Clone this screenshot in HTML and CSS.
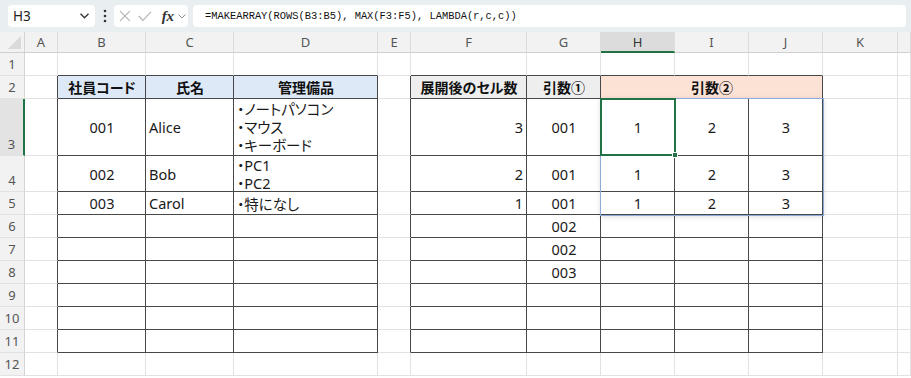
FILE: index.html
```html
<!DOCTYPE html>
<html lang="ja">
<head>
    <meta charset="UTF-8">
    <title>MAKEARRAY</title>
    <link rel="stylesheet" href="styles.css">
</head>
<body>
    <div class="topbar">
        <div class="namebox">
            <span>H3</span>
            <svg width="9" height="6" viewBox="0 0 9 6"><polyline points="0.5,0.8 4.5,4.8 8.5,0.8" fill="none" stroke="#333" stroke-width="1.3"/></svg>
        </div>
        <div class="dots">
            <svg width="4" height="14" viewBox="0 0 4 14"><circle cx="2" cy="2" r="1.3" fill="#333"/><circle cx="2" cy="7" r="1.3" fill="#333"/><circle cx="2" cy="12" r="1.3" fill="#333"/></svg>
        </div>
        <div class="fxbox">
            <svg width="12" height="12" viewBox="0 0 12 12"><path d="M1 1 L11 11 M11 1 L1 11" stroke="#b4b4b4" stroke-width="1.2" fill="none"/></svg>
            <svg width="14" height="11" viewBox="0 0 14 11"><polyline points="0.8,5 5,9.5 13.2,0.8" stroke="#b4b4b4" stroke-width="1.2" fill="none"/></svg>
            <span class="fx">fx</span>
            <svg width="8" height="5" viewBox="0 0 8 5"><polyline points="0.5,0.5 4,4 7.5,0.5" fill="none" stroke="#888" stroke-width="1"/></svg>
        </div>
        <div class="formula">=MAKEARRAY(ROWS(B3:B5), MAX(F3:F5), LAMBDA(r,c,c))</div>
    </div>

    <div class="sheet">
        <div class="cells">
            <!-- column headers -->
            <div class="corner"><span class="tri"></span></div>
            <div class="hd">A</div>
            <div class="hd">B</div>
            <div class="hd">C</div>
            <div class="hd">D</div>
            <div class="hd">E</div>
            <div class="hd">F</div>
            <div class="hd">G</div>
            <div class="hd sel">H</div>
            <div class="hd">I</div>
            <div class="hd">J</div>
            <div class="hd">K</div>
            <div class="hd"></div>

            <!-- row 1 -->
            <div class="rh">1</div>
            <div class="c"></div>
            <div class="c bt"></div><div class="c bt"></div><div class="c bt"></div>
            <div class="c"></div>
            <div class="c bt"></div><div class="c bt"></div><div class="c bt"></div><div class="c bt"></div><div class="c bt"></div>
            <div class="c"></div><div class="c"></div>

            <!-- row 2 -->
            <div class="rh">2</div>
            <div class="c br"></div>
            <div class="c t head blue">社員コード</div>
            <div class="c t head blue">氏名</div>
            <div class="c t head blue">管理備品</div>
            <div class="c br"></div>
            <div class="c t head gray">展開後のセル数</div>
            <div class="c t head gray">引数①</div>
            <div class="c t head orange span3">引数②</div>
            <div class="c"></div><div class="c"></div>

            <!-- row 3 -->
            <div class="rh sel">3</div>
            <div class="c br"></div>
            <div class="c t ctr">001</div>
            <div class="c t">Alice</div>
            <div class="c t lines"><span>・ノートパソコン</span><span>・マウス</span><span>・キーボード</span></div>
            <div class="c br"></div>
            <div class="c t rt">3</div>
            <div class="c t ctr">001</div>
            <div class="c t ctr">1</div>
            <div class="c t ctr">2</div>
            <div class="c t ctr">3</div>
            <div class="c"></div><div class="c"></div>

            <!-- row 4 -->
            <div class="rh">4</div>
            <div class="c br"></div>
            <div class="c t ctr">002</div>
            <div class="c t">Bob</div>
            <div class="c t lines"><span>・PC1</span><span>・PC2</span></div>
            <div class="c br"></div>
            <div class="c t rt">2</div>
            <div class="c t ctr">001</div>
            <div class="c t ctr">1</div>
            <div class="c t ctr">2</div>
            <div class="c t ctr">3</div>
            <div class="c"></div><div class="c"></div>

            <!-- row 5 -->
            <div class="rh">5</div>
            <div class="c br"></div>
            <div class="c t ctr">003</div>
            <div class="c t">Carol</div>
            <div class="c t">・特になし</div>
            <div class="c br"></div>
            <div class="c t rt">1</div>
            <div class="c t ctr">001</div>
            <div class="c t ctr">1</div>
            <div class="c t ctr">2</div>
            <div class="c t ctr">3</div>
            <div class="c"></div><div class="c"></div>

            <!-- row 6 -->
            <div class="rh">6</div>
            <div class="c br"></div>
            <div class="c t"></div><div class="c t"></div><div class="c t"></div>
            <div class="c br"></div>
            <div class="c t"></div>
            <div class="c t ctr">002</div>
            <div class="c t"></div><div class="c t"></div><div class="c t"></div>
            <div class="c"></div><div class="c"></div>

            <!-- row 7 -->
            <div class="rh">7</div>
            <div class="c br"></div>
            <div class="c t"></div><div class="c t"></div><div class="c t"></div>
            <div class="c br"></div>
            <div class="c t"></div>
            <div class="c t ctr">002</div>
            <div class="c t"></div><div class="c t"></div><div class="c t"></div>
            <div class="c"></div><div class="c"></div>

            <!-- row 8 -->
            <div class="rh">8</div>
            <div class="c br"></div>
            <div class="c t"></div><div class="c t"></div><div class="c t"></div>
            <div class="c br"></div>
            <div class="c t"></div>
            <div class="c t ctr">003</div>
            <div class="c t"></div><div class="c t"></div><div class="c t"></div>
            <div class="c"></div><div class="c"></div>

            <!-- row 9 -->
            <div class="rh">9</div>
            <div class="c br"></div>
            <div class="c t"></div><div class="c t"></div><div class="c t"></div>
            <div class="c br"></div>
            <div class="c t"></div><div class="c t"></div>
            <div class="c t"></div><div class="c t"></div><div class="c t"></div>
            <div class="c"></div><div class="c"></div>

            <!-- row 10 -->
            <div class="rh">10</div>
            <div class="c br"></div>
            <div class="c t"></div><div class="c t"></div><div class="c t"></div>
            <div class="c br"></div>
            <div class="c t"></div><div class="c t"></div>
            <div class="c t"></div><div class="c t"></div><div class="c t"></div>
            <div class="c"></div><div class="c"></div>

            <!-- row 11 -->
            <div class="rh">11</div>
            <div class="c br"></div>
            <div class="c t"></div><div class="c t"></div><div class="c t"></div>
            <div class="c br"></div>
            <div class="c t"></div><div class="c t"></div>
            <div class="c t"></div><div class="c t"></div><div class="c t"></div>
            <div class="c"></div><div class="c"></div>

            <!-- row 12 -->
            <div class="rh">12</div>
            <div class="c"></div>
            <div class="c"></div><div class="c"></div><div class="c"></div>
            <div class="c"></div>
            <div class="c"></div><div class="c"></div>
            <div class="c"></div><div class="c"></div><div class="c"></div>
            <div class="c"></div><div class="c"></div>
        </div>

        <!-- spill range and active cell drawn over the grid -->
        <div class="overlay">
            <div class="spill"></div>
            <div class="active"></div>
        </div>
    </div>
</body>
</html>
```

FILE: styles.css
```css
body {
    margin: 0;
    padding: 0;
    background-color: #ffffff;
    font-family: "Noto Sans", "Noto Sans CJK JP", sans-serif;
    font-feature-settings: "palt";
    overflow: hidden;
}

/* formula bar */
.topbar {
    height: 32px;
    box-sizing: border-box;
    padding: 5px 5px 0 8px;
    background-color: #e9eef0;
    display: flex;
    align-items: flex-start;
}
.namebox {
    width: 87px;
    height: 22px;
    box-sizing: border-box;
    background-color: #fff;
    border-radius: 4px;
    display: flex;
    align-items: center;
    justify-content: space-between;
    padding: 0 6px 0 5px;
    font-size: 13.5px;
    color: #222;
}
.dots {
    width: 19px;
    height: 22px;
    display: flex;
    align-items: center;
    justify-content: center;
}
.fxbox {
    width: 74px;
    height: 22px;
    box-sizing: border-box;
    background-color: #fff;
    border-radius: 4px;
    display: flex;
    align-items: center;
    padding: 0 2px 0 5px;
    gap: 7px;
}
.fxbox .fx {
    font-family: "Liberation Serif", serif;
    font-style: italic;
    font-weight: bold;
    font-size: 15px;
    color: #333;
    margin-left: 3px;
    margin-right: -3px;
}
.formula {
    flex: 1;
    height: 22px;
    box-sizing: border-box;
    margin-left: 5px;
    background-color: #fff;
    border-radius: 4px;
    padding: 0 12px;
    display: flex;
    align-items: center;
    font-family: "Liberation Mono", monospace;
    font-size: 10.4px;
    color: #111;
    white-space: nowrap;
}

/* sheet grid */
.sheet {
    --cols: 25px 33px 88px 88px 144px 33px 116px 74px 74px 74px 74px 75px 1fr;
    --rows: 21px 23px 23px 57px 36px 23px 23px 23px 23px 23px 23px 23px 23px;
    display: grid;
}
.cells, .overlay {
    grid-area: 1 / 1;
    display: grid;
    grid-template-columns: var(--cols);
    grid-template-rows: var(--rows);
}
.overlay {
    pointer-events: none;
}

.corner {
    background-color: #f2f2f2;
    border-right: 1px solid #d4d4d4;
    border-bottom: 1px solid #cfcfcf;
    position: relative;
}
.corner .tri {
    position: absolute;
    right: 3px;
    bottom: 3px;
    width: 0;
    height: 0;
    border-left: 13px solid transparent;
    border-bottom: 13px solid #dadada;
}
.hd {
    background-color: #f2f2f2;
    border-right: 1px solid #dcdcdc;
    border-bottom: 1px solid #cfcfcf;
    box-sizing: border-box;
    display: flex;
    align-items: center;
    justify-content: center;
    font-size: 13px;
    color: #555;
}
.hd.sel {
    background-color: #dcdcdc;
    border-bottom: 2px solid #217346;
    color: #333;
}
.rh {
    background-color: #f2f2f2;
    border-right: 1px solid #d4d4d4;
    border-bottom: 1px solid #e2e2e2;
    box-sizing: border-box;
    display: flex;
    align-items: flex-end;
    justify-content: center;
    padding-bottom: 2px;
    font-size: 13px;
    color: #555;
}
.rh.sel {
    background-color: #e3e3e3;
    border-right: 2px solid #217346;
}

.c {
    border-right: 1px solid #e2e2e2;
    border-bottom: 1px solid #e2e2e2;
    box-sizing: border-box;
    display: flex;
    align-items: center;
    padding: 0 2px 0 3px;
    min-width: 0;
    overflow: hidden;
    white-space: nowrap;
    font-size: 14.5px;
    color: #1a1a1a;
}
.c.t {
    border-right-color: #474747;
    border-bottom-color: #474747;
}
.c.bt {
    border-bottom-color: #474747;
}
.c.br {
    border-right-color: #474747;
}
.c.ctr {
    justify-content: center;
}
.c.rt {
    justify-content: flex-end;
    padding-right: 3px;
}
.c.lines {
    flex-direction: column;
    justify-content: center;
    align-items: flex-start;
    line-height: 18px;
}
.c.lines span {
    display: block;
    height: 18px;
}
.c.head {
    justify-content: center;
    font-weight: bold;
    font-size: 14px;
    color: #111;
}
.blue { background-color: #dde9f6; }
.gray { background-color: #eeeeee; }
.orange { background-color: #fbe2d5; }
.span3 { grid-column: span 3; }

/* spill outline of H3:J5 */
.spill {
    grid-row: 4 / span 3;
    grid-column: 9 / span 3;
    margin: -1px -1px -1px -1px;
    border: 1px solid #8eaadb;
    box-shadow: 0 1px 5px rgba(0, 0, 0, 0.12);
}
/* active cell H3 */
.active {
    grid-row: 4;
    grid-column: 9;
    margin: -1px -1px 0 -1px;
    border: 2px solid #217346;
    position: relative;
}
.active::after {
    content: "";
    position: absolute;
    right: -4px;
    bottom: -4px;
    width: 4px;
    height: 4px;
    background-color: #217346;
    border: 1px solid #fff;
}
```
